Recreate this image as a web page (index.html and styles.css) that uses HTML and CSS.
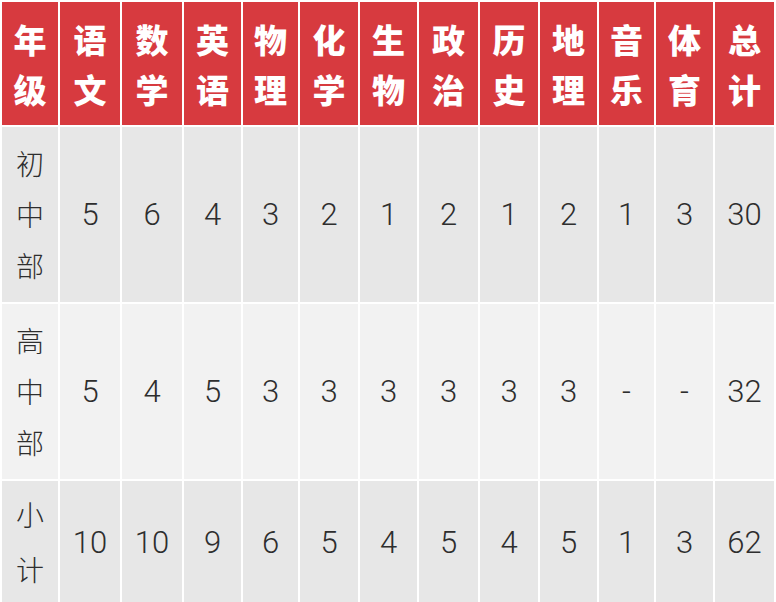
FILE: index.html
```html
<!DOCTYPE html>
<html lang="zh-CN">
<head>
<meta charset="utf-8">
<title>课时表</title>
<link rel="stylesheet" href="styles.css">
</head>
<body>
<div class="table">
  <div class="th">年<br>级</div>
  <div class="th">语<br>文</div>
  <div class="th">数<br>学</div>
  <div class="th">英<br>语</div>
  <div class="th">物<br>理</div>
  <div class="th">化<br>学</div>
  <div class="th">生<br>物</div>
  <div class="th">政<br>治</div>
  <div class="th">历<br>史</div>
  <div class="th">地<br>理</div>
  <div class="th">音<br>乐</div>
  <div class="th">体<br>育</div>
  <div class="th">总<br>计</div>

  <div class="td dark label">初<br>中<br>部</div>
  <div class="td dark">5</div>
  <div class="td dark">6</div>
  <div class="td dark">4</div>
  <div class="td dark">3</div>
  <div class="td dark">2</div>
  <div class="td dark">1</div>
  <div class="td dark">2</div>
  <div class="td dark">1</div>
  <div class="td dark">2</div>
  <div class="td dark">1</div>
  <div class="td dark">3</div>
  <div class="td dark">30</div>

  <div class="td light label">高<br>中<br>部</div>
  <div class="td light">5</div>
  <div class="td light">4</div>
  <div class="td light">5</div>
  <div class="td light">3</div>
  <div class="td light">3</div>
  <div class="td light">3</div>
  <div class="td light">3</div>
  <div class="td light">3</div>
  <div class="td light">3</div>
  <div class="td light">-</div>
  <div class="td light">-</div>
  <div class="td light">32</div>

  <div class="td dark label sub">小<br>计</div>
  <div class="td dark">10</div>
  <div class="td dark">10</div>
  <div class="td dark">9</div>
  <div class="td dark">6</div>
  <div class="td dark">5</div>
  <div class="td dark">4</div>
  <div class="td dark">5</div>
  <div class="td dark">4</div>
  <div class="td dark">5</div>
  <div class="td dark">1</div>
  <div class="td dark">3</div>
  <div class="td dark">62</div>
</div>
</body>
</html>
```

FILE: styles.css
```css
html, body {
  margin: 0;
  padding: 0;
  background: #ffffff;
}

.table {
  display: grid;
  grid-template-columns: 56px 60px 60px 57px 55px 58px 57px 59px 58px 57px 55px 57px 59px;
  grid-template-rows: 123px 175px 175px 122px;
  gap: 2px;
  padding: 2px 0 0 2px;
  width: 772px;
}

.th {
  background: #d73a3f;
  color: #ffffff;
  font-family: "Noto Sans CJK SC", sans-serif;
  font-weight: 900;
  font-size: 33px;
  line-height: 50px;
  display: flex;
  align-items: center;
  justify-content: center;
  text-align: center;
}

.td {
  display: flex;
  align-items: center;
  justify-content: center;
  text-align: center;
  color: #2e2e2e;
  font-family: Roboto, "Liberation Sans", sans-serif;
  font-weight: 300;
  font-size: 31px;
}

.label {
  font-family: "Noto Sans CJK SC", sans-serif;
  font-weight: 300;
  font-size: 28px;
  line-height: 51px;
}

.label.sub {
  line-height: 55px;
}

.dark {
  background: #e7e7e7;
}

.light {
  background: #f2f2f2;
}
```
